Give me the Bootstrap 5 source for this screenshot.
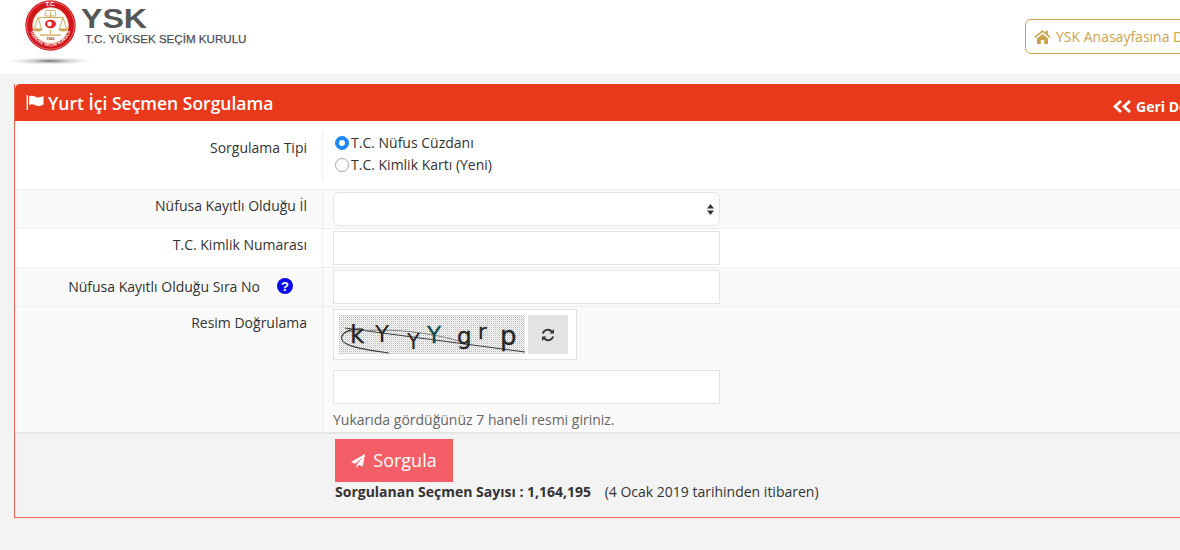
<!DOCTYPE html>
<html lang="tr">
<head>
<meta charset="utf-8">
<title>Yurt İçi Seçmen Sorgulama</title>
<link rel="stylesheet" href="https://cdn.jsdelivr.net/npm/bootstrap@5.3.0/dist/css/bootstrap.min.css">
<style>
html,body{height:550px;overflow:hidden}
body{background:#f3f3f3;font-family:"Open Sans","Liberation Sans",sans-serif;font-size:14px;line-height:22px;color:#333}
.page-wrap{width:1300px}
.site-head{height:74px;background:#fff}
.logo-zone{width:1025px;flex:none}
.logo-svg{display:block}
.home-link{height:35px;margin-top:19px;padding:0 8px;border:1px solid #c9a24d;border-radius:6px;color:#c9a24d;text-decoration:none;white-space:nowrap;background:#fff;gap:5px}
.query-panel{margin:10px 0 0 14px;width:1286px;border:0;border-left:1px solid #f0654f;border-bottom:1px solid #f0654f;border-radius:0;background:#fff}
.panel-top{height:37px;background:#e8391c;color:#fff;padding:0 0 0 11px;border:0;border-radius:0}
.panel-title{font-size:17.5px;font-weight:600;line-height:37px}
.panel-title span{padding-top:2px}
.back-link{color:#fff;font-weight:700;text-decoration:none;width:187px;flex:none;padding-top:8px}
.form-line{border-bottom:1px solid #eeeeee}
.line-alt{background:#fafafa}
.line-label{width:307px;flex:none;text-align:right;padding:5px 15px 0 0}
.line-body{flex:1;border-left:1px solid #eeeeee;padding:2px 0 0 10px}
.line-first{height:69px;padding-top:11px}
.line-first .line-label{padding-top:5px;height:47px}
.line-first .line-body{padding:0 0 0 12px;height:47px;margin-top:0}
.line-std{height:39px}
.line-tall{height:127px;border-bottom:2px solid #e6e6e6}
.label-help{padding-top:8px}
.help-dot{margin-left:17px;margin-right:14px;margin-top:-3px}
.radio-row{height:22px;margin-top:0}
.query-radio{width:14px;height:14px;margin:0 2px 0 0;border:1px solid #a9a9a9;flex:none;--bs-form-check-bg:#fff}
.query-radio:checked{background-color:#1e87f5;border-color:#1e87f5}
.field-box{width:387px;height:34px;border:1px solid #e3e3e3;border-radius:0;padding:0 8px;background:#fff;font-size:14px}
select.field-box{border-radius:6px;background-image:url("data:image/svg+xml,%3Csvg xmlns='http://www.w3.org/2000/svg' width='8' height='14'%3E%3Cpath d='M4 1 8 6H0zM4 13 0 8h8z' fill='%23333'/%3E%3C/svg%3E");background-size:7px 13px;background-position:right 5px center;background-repeat:no-repeat}
.captcha-frame{width:244px;height:51px;border:1px solid #e3e3e3;padding:5px;margin-bottom:10px;background:#fff}
.captcha-refresh{width:40px;height:39px;margin-left:3px;background:#e3e3e3;border:0;padding:0}
.field-hint{color:#666;margin-top:5px}
.line-action{height:83px;background:#f3f3f3;padding:5px 0 0 320px}
.send-btn{width:118px;height:43px;background:#f45f67;border:0;border-radius:0;color:#fff;font-size:18px;padding:0;gap:8px}
.count-note{margin-top:-1px}
.count-note span{margin-left:10px}
.count-note b{font-weight:700}
</style>
</head>
<body>
<div class="page-wrap">
  <header class="site-head d-flex">
    <div class="logo-zone">
      <svg class="logo-svg" width="260" height="74" viewBox="0 0 260 74" role="img" aria-label="YSK logo">
        <defs>
          <radialGradient id="shade"><stop offset="0" stop-color="#666"/><stop offset=".4" stop-color="#aaa" stop-opacity=".6"/><stop offset="1" stop-color="#ddd" stop-opacity="0"/></radialGradient>
          <path id="ringbot" d="M29.500 25.500a20.800 20.800 0 0 0 41.600 0"/>
        </defs>
        <ellipse cx="50" cy="61" rx="44" ry="4" fill="url(#shade)"/>
        <circle cx="50.500" cy="25.500" r="25.200" fill="#d2161c"/>
        <circle cx="50.500" cy="25.500" r="23.800" fill="none" stroke="#f3c0b0" stroke-width=".5"/>
        <circle cx="50.500" cy="25.500" r="18" fill="#fff"/>
        <circle cx="50.500" cy="25.500" r="17.600" fill="none" stroke="#e7d29a" stroke-width=".7"/>
        <text x="50.500" y="5.800" font-family="Liberation Sans" font-size="5.500" font-weight="700" fill="#fff" text-anchor="middle">T.C.</text>
        <text font-family="Liberation Sans" font-size="4" font-weight="700" fill="#fff" letter-spacing=".2"><textPath href="#ringbot" startOffset="50%" text-anchor="middle">TÜRKİYE SEÇİM KURULU</textPath></text>
        <path d="M38 17.500h25M50.500 12v22M38 17.500l-3.500 11M38 17.500l3.500 11M63 17.500l-3.500 11M63 17.500l3.500 11" stroke="#c9a34f" stroke-width=".9" fill="none"/>
        <path d="M33.500 28.500a4.500 3 0 0 0 9 0zM58.500 28.500a4.500 3 0 0 0 9 0z" fill="#c9a34f"/>
        <path d="M46 10.500h9l1 5.500H45z" fill="none" stroke="#c9a34f" stroke-width=".8"/>
        <path d="M40 34.500h21v1.200H40z" fill="#c9a34f"/>
        <circle cx="50.500" cy="24" r="6" fill="#fff"/>
        <path d="M45 24a5.500 4.200 0 0 1 11 0 5.500 4.200 0 0 1-11 0z" fill="#e1252b"/>
        <circle cx="49.500" cy="24" r="2.400" fill="#fff"/>
        <text x="50.500" y="39.500" font-family="Liberation Sans" font-size="3.600" font-weight="700" fill="#b3161b" text-anchor="middle">1966</text>
        <text x="81" y="28" font-family="Liberation Sans" font-size="28" font-weight="700" fill="#565656" textLength="66" lengthAdjust="spacingAndGlyphs">YSK</text>
        <text x="85" y="43" font-family="Liberation Sans" font-size="11.600" fill="#4f4f4f" stroke="#4f4f4f" stroke-width=".25">T.C. YÜKSEK SEÇİM KURULU</text>
      </svg>
    </div>
    <a class="home-link d-inline-flex align-items-center" href="#">
      <svg width="17" height="15" viewBox="0 0 17 15" aria-hidden="true"><path fill="#c9a24d" d="M8.500 1 .4 7.800l.9 1.100L8.500 3l7.200 5.900.9-1.100-2.800-2.400V1.500h-2v2.300zM3 9.600V15h3.800v-4h3.400v4H14V9.600L8.500 5z"/></svg>
      <span>YSK Anasayfasına Dön</span>
    </a>
  </header>

  <main class="card query-panel">
    <div class="card-header panel-top d-flex align-items-center justify-content-between">
      <div class="panel-title d-flex align-items-center gap-1">
        <svg width="18" height="15" viewBox="0 0 18 15" aria-hidden="true"><path fill="#fff" d="M.6 0h1.400v15H.6zM3 1.600c2-1.300 4-1.300 6 0s4.500 1.100 8.500-.6v8.400c-3.500 1.800-6 2-8.500.7s-4-1.200-6 .1z"/></svg>
        <span>Yurt İçi Seçmen Sorgulama</span>
      </div>
      <a class="back-link d-flex align-items-center gap-1" href="#">
        <svg width="19" height="13" viewBox="0 0 19 13" aria-hidden="true"><path fill="none" stroke="#fff" stroke-width="2.800" d="M8 1 2 6.500 8 12M17 1l-6 5.500 6 5.500"/></svg>
        <span>Geri Dön</span>
      </a>
    </div>

    <form>
      <div class="form-line line-first d-flex">
        <div class="line-label">Sorgulama Tipi</div>
        <div class="line-body">
          <div class="radio-row d-flex align-items-center">
            <input class="form-check-input query-radio" type="radio" name="tip" id="tipA" checked>
            <label for="tipA">T.C. Nüfus Cüzdanı</label>
          </div>
          <div class="radio-row d-flex align-items-center">
            <input class="form-check-input query-radio" type="radio" name="tip" id="tipB">
            <label for="tipB">T.C. Kimlik Kartı (Yeni)</label>
          </div>
        </div>
      </div>

      <div class="form-line line-alt line-std d-flex">
        <div class="line-label">Nüfusa Kayıtlı Olduğu İl</div>
        <div class="line-body"><select class="form-select field-box" aria-label="İl"><option></option></select></div>
      </div>

      <div class="form-line line-std d-flex">
        <div class="line-label">T.C. Kimlik Numarası</div>
        <div class="line-body"><input class="form-control field-box" type="text" aria-label="T.C. Kimlik Numarası"></div>
      </div>

      <div class="form-line line-alt line-std d-flex">
        <div class="line-label label-help">
          <span class="d-inline-flex align-items-center justify-content-end">Nüfusa Kayıtlı Olduğu Sıra No
            <svg class="help-dot" width="16" height="16" viewBox="0 0 16 16" aria-hidden="true"><circle cx="8" cy="8" r="8" fill="#0a0ae6"/><text x="8" y="12.500" font-family="Liberation Sans" font-size="13" font-weight="700" fill="#fff" text-anchor="middle">?</text></svg>
          </span>
        </div>
        <div class="line-body"><input class="form-control field-box" type="text" aria-label="Sıra No"></div>
      </div>

      <div class="form-line line-alt line-tall d-flex">
        <div class="line-label">Resim Doğrulama</div>
        <div class="line-body">
          <div class="captcha-frame d-flex">
            <svg width="186" height="39" viewBox="0 0 186 39" role="img" aria-label="Doğrulama resmi">
              <defs><pattern id="dots" width="2" height="2" patternUnits="userSpaceOnUse"><rect width="2" height="2" fill="#fff"/><rect width="1" height="1" fill="#b5b5b5"/><rect x="1" y="1" width="1" height="1" fill="#dcdcdc"/></pattern></defs>
              <rect width="186" height="39" fill="url(#dots)"/>
              <g fill="none" stroke="#3c3c3c">
                <path stroke-width="1.100" d="M24 14C4 13-2 23 6 28c8 5 24 7 44 10"/>
                <path stroke-width="1" d="M6 13 186 37"/>
                <path stroke-width=".9" stroke="#777" d="M8 17c40-5 80 0 112 9"/>
              </g>
              <g font-family="DejaVu Sans" fill="#262626">
                <text x="11" y="28" font-size="25" stroke="#262626" stroke-width=".25">k</text>
                <text x="36" y="27" font-size="23">Y</text>
                <text x="68" y="34" font-size="21">Y</text>
                <text x="88" y="28" font-size="23" fill="#0f4d4d" stroke="#0f4d4d" stroke-width=".3">Y</text>
                <text x="118" y="29" font-size="23" stroke="#262626" stroke-width=".4">g</text>
                <text x="139" y="24" font-size="21" stroke="#262626" stroke-width=".3">r</text>
                <text x="161" y="30" font-size="26" stroke="#262626" stroke-width=".4">p</text>
              </g>
            </svg>
            <button class="captcha-refresh d-flex align-items-center justify-content-center" type="button" aria-label="Yenile">
              <svg width="14" height="14" viewBox="0 0 14 14" aria-hidden="true"><path fill="none" stroke="#333" stroke-width="1.900" d="M1.800 5.500A5.300 5.300 0 0 1 11 3.800M12.200 8.500A5.300 5.300 0 0 1 3 10.200"/><path fill="#333" d="M13 1v4.500H8.500zM1 13V8.500h4.500z"/></svg>
            </button>
          </div>
          <input class="form-control field-box" type="text" aria-label="Resim Doğrulama">
          <div class="field-hint">Yukarıda gördüğünüz 7 haneli resmi giriniz.</div>
        </div>
      </div>

      <div class="line-action">
        <button class="btn send-btn d-flex align-items-center justify-content-center" type="button">
          <svg width="14" height="14" viewBox="0 0 14 14" aria-hidden="true"><path fill="#fff" d="M14 0 11.800 12.500 7.800 10.800 5.600 14V10.800L12 2.800 4.300 9.700 0 8z"/></svg>
          <span>Sorgula</span>
        </button>
        <div class="count-note"><b>Sorgulanan Seçmen Sayısı : 1,164,195</b> <span>(4 Ocak 2019 tarihinden itibaren)</span></div>
      </div>
    </form>
  </main>
</div>
<script src="https://cdn.jsdelivr.net/npm/bootstrap@5.3.0/dist/js/bootstrap.bundle.min.js"></script>
</body>
</html>
